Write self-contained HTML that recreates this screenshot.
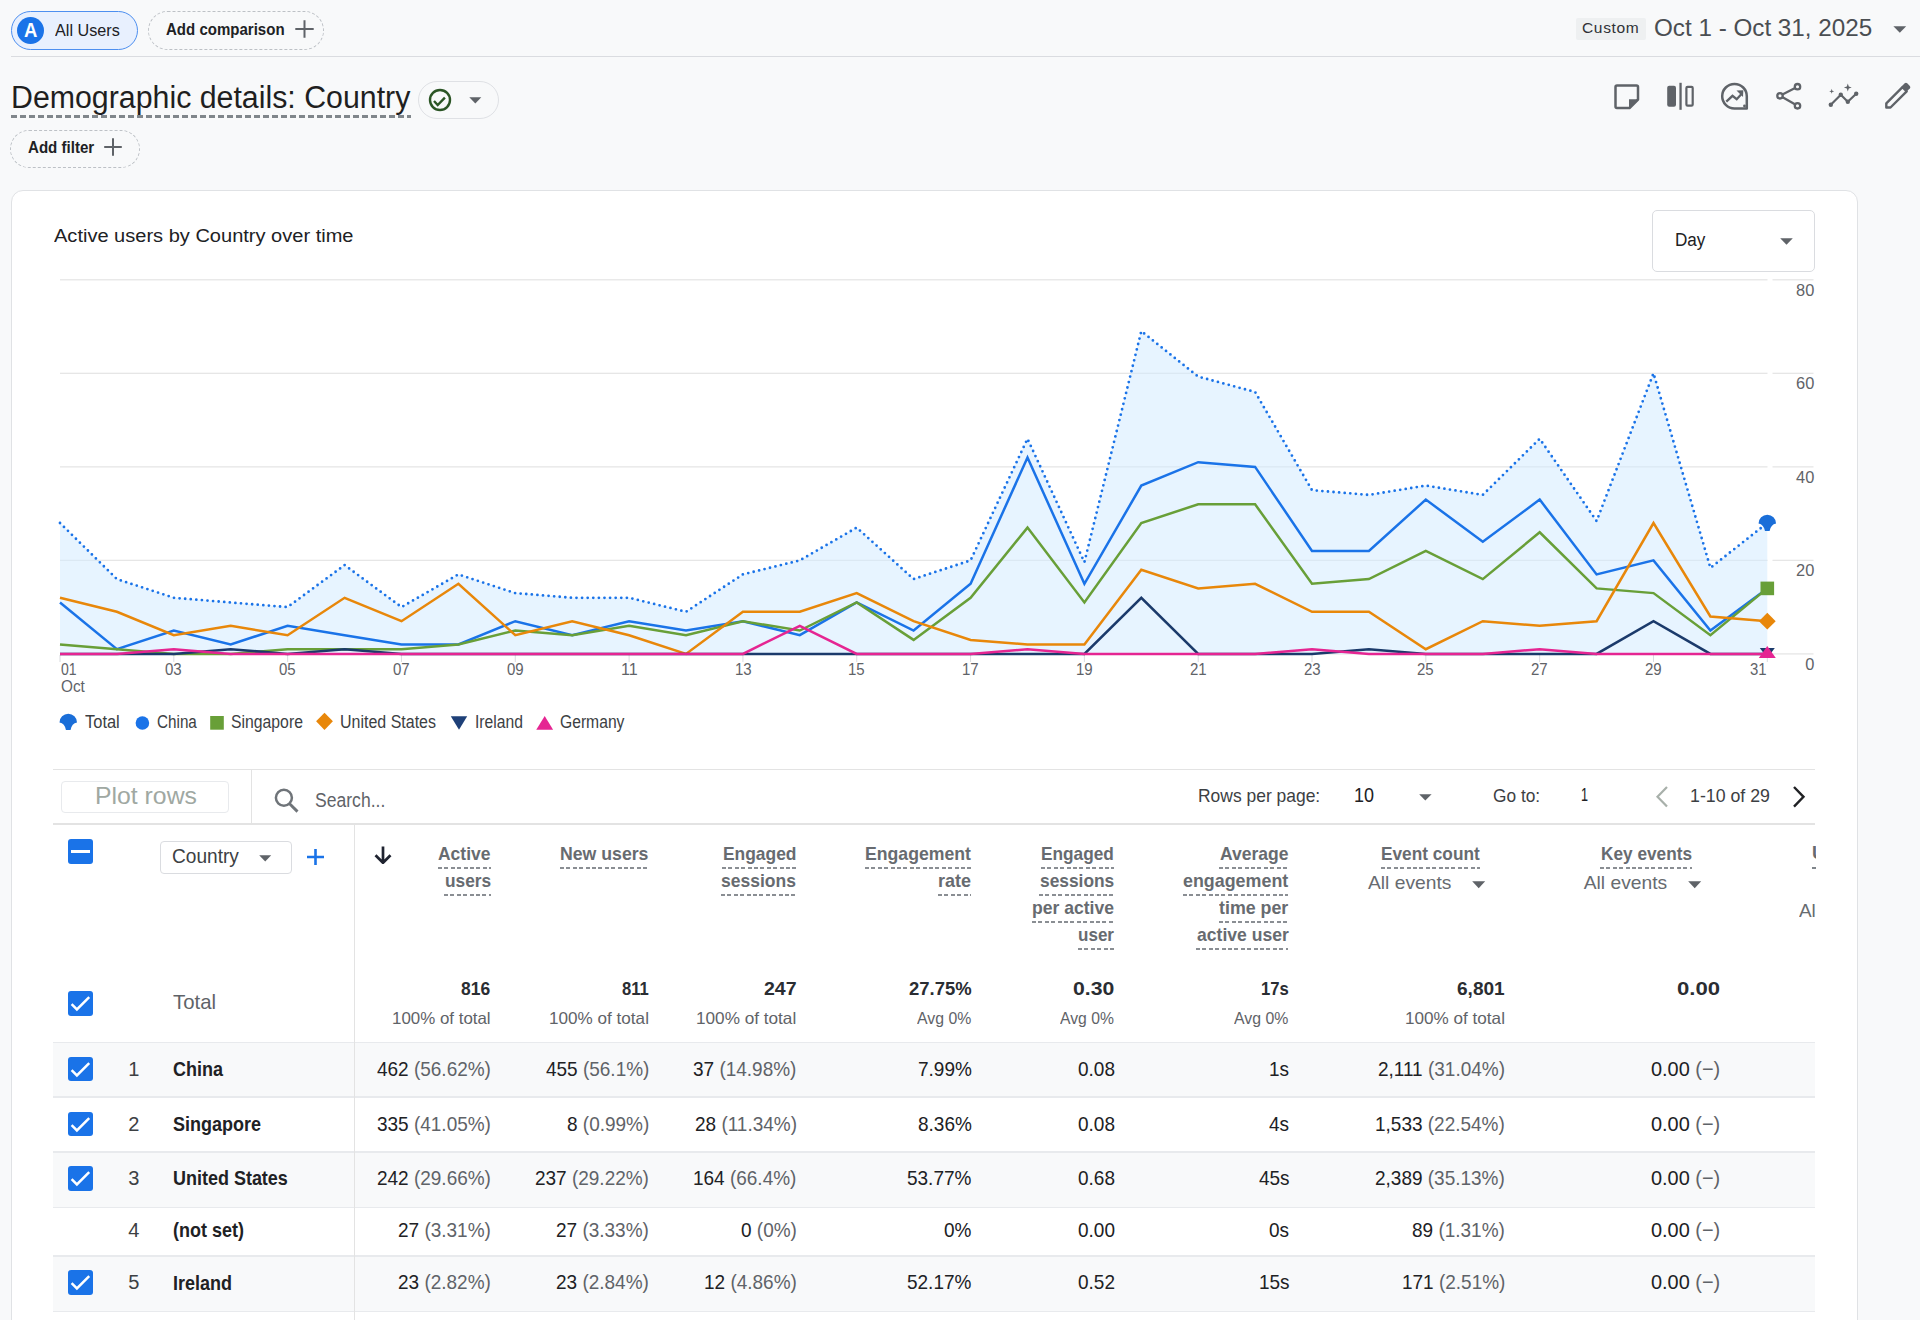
<!DOCTYPE html>
<html><head><meta charset="utf-8">
<style>
*{box-sizing:border-box;margin:0;padding:0}
html,body{width:1920px;height:1320px;overflow:hidden;background:#f8f9fa;font-family:"Liberation Sans",sans-serif;color:#202124}
.t{position:absolute;white-space:nowrap}
.a,.icon{position:absolute}
.i{font-style:normal;color:#5f6368}
</style></head>
<body>

<div class="a" style="left:10.5px;top:11px;width:127px;height:39px;border-radius:20px;background:#e8f0fe;border:1px solid #4d8ff0"></div>
<div class="a" style="left:16.8px;top:16.8px;width:27px;height:27px;border-radius:50%;background:#1a73e8"></div>
<div class="t" style="left:23.60px;transform-origin:0 0;top:18.88px;font-size:20.35px;line-height:22.73px;color:#fff;font-weight:bold;transform:scaleX(0.9114);">A</div>
<div class="t" style="left:55.00px;transform-origin:0 0;top:21.37px;font-size:16.28px;line-height:18.18px;color:#202124;transform:scaleX(0.9951);">All Users</div>
<div class="a" style="left:148.2px;top:11.3px;width:176.3px;height:38.5px;border-radius:20px;border:1px dashed #bdc1c6"></div>
<div class="t" style="left:165.90px;transform-origin:0 0;top:20.29px;font-size:17.08px;line-height:19.08px;color:#202124;font-weight:bold;transform:scaleX(0.8802);">Add comparison</div>
<svg class="a" style="left:295px;top:20px" width="19" height="18" viewBox="0 0 19 18"><path d="M9.5 0.3v17.5M0.3 9h18.4" stroke="#5f6368" stroke-width="2"/></svg>
<div class="a" style="left:10.7px;top:56px;width:1910px;height:1px;background:#dadce0"></div>
<div class="a" style="left:1576px;top:18.1px;width:69.7px;height:22px;background:#eef0f1;border-radius:2px"></div>
<div class="t" style="left:1582.00px;transform-origin:0 0;top:19.43px;font-size:15.55px;line-height:17.37px;color:#2f3236;letter-spacing:0.64px;">Custom</div>
<div class="t" style="left:1654.30px;transform-origin:0 0;top:14.80px;font-size:23.98px;line-height:26.79px;color:#4a4e52;transform:scaleX(1.0108);">Oct 1 - Oct 31, 2025</div>
<svg class="a" style="left:1893px;top:26px" width="14" height="7"><path d="M0.4 0.3h12.8L6.8 6.8z" fill="#5f6368"/></svg>
<div class="t" style="left:10.80px;transform-origin:0 0;top:80.14px;font-size:30.67px;line-height:34.26px;color:#1f1f1f;transform:scaleX(0.9889);">Demographic details: Country</div>
<div class="a" style="left:11px;top:115px;width:399.5px;height:3px;background:repeating-linear-gradient(90deg,#80868b 0 5.6px,transparent 5.6px 9px)"></div>
<div class="a" style="left:417.5px;top:81.2px;width:81.2px;height:37.6px;border-radius:19px;border:1px solid #dfe1e5"></div>
<svg class="a" style="left:428px;top:88px" width="24" height="24" viewBox="0 0 24 24"><circle cx="12" cy="12" r="10" fill="none" stroke="#2b5525" stroke-width="2.4"/><path d="M6 13l3.7 4 7.2-7.3" fill="none" stroke="#2b5525" stroke-width="2.4"/></svg>
<svg class="a" style="left:469px;top:97px" width="13" height="7"><path d="M0.3 0.3h12L6.3 6.6z" fill="#5f6368"/></svg>
<div class="a" style="left:10px;top:130.4px;width:130px;height:38px;border-radius:19px;border:1px dashed #bdc1c6"></div>
<div class="t" style="left:27.50px;transform-origin:0 0;top:138.35px;font-size:17.30px;line-height:19.32px;color:#202124;font-weight:bold;transform:scaleX(0.8725);">Add filter</div>
<svg class="a" style="left:104px;top:138px" width="18" height="18" viewBox="0 0 18 18"><path d="M9 0.2v17.6M0.2 9h17.6" stroke="#5f6368" stroke-width="2"/></svg>
<!-- ICONS -->
<svg class="icon" style="left:1600px;top:75px" width="320" height="45" viewBox="0 0 320 45">
<path d="M17 10.5h19.5a1.5 1.5 0 0 1 1.5 1.5v12.5l-8.5 8.5H17a1.5 1.5 0 0 1-1.5-1.5V12a1.5 1.5 0 0 1 1.5-1.5z" fill="none" stroke="#5f6368" stroke-width="2.5" stroke-linejoin="round"/>
<path d="M29 24.3h9l-9 9z" fill="#5f6368"/>
<rect x="67.2" y="10.8" width="8.8" height="21" rx="2" fill="#5f6368"/>
<rect x="79.4" y="7.8" width="2.3" height="27" fill="#5f6368"/>
<rect x="86.4" y="11.9" width="6.3" height="18.8" rx="1.2" fill="none" stroke="#5f6368" stroke-width="2.2"/>
<path d="M146.8 21.2A12.3 12.3 0 1 0 134.5 33.5H146.8Z" fill="none" stroke="#5f6368" stroke-width="2.5" stroke-linejoin="round"/>
<circle cx="144.5" cy="31" r="1.4" fill="#5f6368"/>
<path d="M126.3 26.7l6.2-5.9 4.2 3.4 5.5-6" fill="none" stroke="#5f6368" stroke-width="2.3"/>
<path d="M136.5 15.6l6.8-.3-.3 6.8z" fill="#5f6368"/>
<path d="M180 20.8L197.5 11.7M180 20.8L197.5 30.8" stroke="#5f6368" stroke-width="2.3"/>
<circle cx="197.5" cy="11.7" r="2.7" fill="#f8f9fa" stroke="#5f6368" stroke-width="2.3"/>
<circle cx="180" cy="20.8" r="2.7" fill="#f8f9fa" stroke="#5f6368" stroke-width="2.3"/>
<circle cx="197.5" cy="30.8" r="2.7" fill="#f8f9fa" stroke="#5f6368" stroke-width="2.3"/>
<path d="M230.8 29.7L240.8 19.7 247.8 26.7 256.2 18.7" fill="none" stroke="#5f6368" stroke-width="2.2"/>
<circle cx="230.8" cy="29.7" r="2.2" fill="#5f6368"/><circle cx="240.8" cy="19.7" r="2.2" fill="#5f6368"/><circle cx="247.8" cy="26.7" r="2.2" fill="#5f6368"/><circle cx="256.2" cy="18.7" r="2.2" fill="#5f6368"/>
<path d="M247.8 8.6l1 2.9 2.9 1-2.9 1-1 2.9-1-2.9-2.9-1 2.9-1z" fill="#5f6368"/>
<path d="M231.7 13.8l.6 1.9 1.9.6-1.9.6-.6 1.9-.6-1.9-1.9-.6 1.9-.6z" fill="#5f6368"/>
<path d="M286.3 32.5v-4.2L302.5 12.1l4.2 4.2L290.5 32.5z" fill="none" stroke="#5f6368" stroke-width="2.4" stroke-linejoin="round"/>
<path d="M301.5 11.5l3.2-3.2a1.8 1.8 0 0 1 2.5 0l2.6 2.6a1.8 1.8 0 0 1 0 2.5l-3.2 3.2z" fill="#5f6368"/>
</svg>

<div class="a" style="left:11px;top:190px;width:1847px;height:1200px;background:#fff;border:1px solid #e0e2e5;border-radius:12px"></div>
<div class="t" style="left:53.75px;transform-origin:0 0;top:225.44px;font-size:19.19px;line-height:21.43px;color:#202124;transform:scaleX(1.0440);">Active users by Country over time</div>
<div class="a" style="left:1652.4px;top:209.9px;width:162.4px;height:62.4px;border:1px solid #dadce0;border-radius:5px;background:#fff"></div>
<div class="t" style="left:1674.90px;transform-origin:0 0;top:229.34px;font-size:19.19px;line-height:21.43px;color:#202124;transform:scaleX(0.8914);">Day</div>
<svg class="a" style="left:1780px;top:237.8px" width="13" height="7"><path d="M0.2 0.2h12.6L6.5 6.8z" fill="#5f6368"/></svg>
<svg class="a" style="left:0;top:0" width="1920" height="760">
<rect x="60" y="279.15" width="1707.5" height="1.3" fill="#e6e6e6"/><rect x="1772.5" y="279.15" width="41" height="1.3" fill="#e6e6e6"/>
<rect x="60" y="372.68" width="1707.5" height="1.3" fill="#e6e6e6"/><rect x="1772.5" y="372.68" width="41" height="1.3" fill="#e6e6e6"/>
<rect x="60" y="466.20" width="1707.5" height="1.3" fill="#e6e6e6"/><rect x="1772.5" y="466.20" width="41" height="1.3" fill="#e6e6e6"/>
<rect x="60" y="559.73" width="1707.5" height="1.3" fill="#e6e6e6"/><rect x="1772.5" y="559.73" width="41" height="1.3" fill="#e6e6e6"/>
<rect x="60" y="653.25" width="1707.5" height="1.3" fill="#e6e6e6"/><rect x="1772.5" y="653.25" width="41" height="1.3" fill="#e6e6e6"/>
<path d="M60.0,653.9 L60.0,523.0 116.9,579.1 173.8,597.8 230.7,602.5 287.6,607.1 344.6,565.1 401.5,607.1 458.4,574.4 515.3,593.1 572.2,597.8 629.1,597.8 686.0,611.8 742.9,574.4 799.8,560.4 856.7,527.6 913.6,579.1 970.6,560.4 1027.5,438.8 1084.4,562.2 1141.3,331.2 1198.2,376.6 1255.1,392.0 1312.0,490.2 1368.9,494.9 1425.8,485.6 1482.8,494.9 1539.7,438.8 1596.6,521.1 1653.5,373.3 1710.4,567.9 1767.3,523.0 L1767.3,653.9 Z" fill="#cfeaff" fill-opacity="0.5"/>
<rect x="59.50" y="655" width="1" height="7" fill="#dadce0"/>
<rect x="173.32" y="655" width="1" height="7" fill="#dadce0"/>
<rect x="287.14" y="655" width="1" height="7" fill="#dadce0"/>
<rect x="400.96" y="655" width="1" height="7" fill="#dadce0"/>
<rect x="514.78" y="655" width="1" height="7" fill="#dadce0"/>
<rect x="628.60" y="655" width="1" height="7" fill="#dadce0"/>
<rect x="742.42" y="655" width="1" height="7" fill="#dadce0"/>
<rect x="856.24" y="655" width="1" height="7" fill="#dadce0"/>
<rect x="970.06" y="655" width="1" height="7" fill="#dadce0"/>
<rect x="1083.88" y="655" width="1" height="7" fill="#dadce0"/>
<rect x="1197.70" y="655" width="1" height="7" fill="#dadce0"/>
<rect x="1311.52" y="655" width="1" height="7" fill="#dadce0"/>
<rect x="1425.34" y="655" width="1" height="7" fill="#dadce0"/>
<rect x="1539.16" y="655" width="1" height="7" fill="#dadce0"/>
<rect x="1652.98" y="655" width="1" height="7" fill="#dadce0"/>
<rect x="1766.80" y="655" width="1" height="7" fill="#dadce0"/>
<polyline points="60.0,523.0 116.9,579.1 173.8,597.8 230.7,602.5 287.6,607.1 344.6,565.1 401.5,607.1 458.4,574.4 515.3,593.1 572.2,597.8 629.1,597.8 686.0,611.8 742.9,574.4 799.8,560.4 856.7,527.6 913.6,579.1 970.6,560.4 1027.5,438.8 1084.4,562.2 1141.3,331.2 1198.2,376.6 1255.1,392.0 1312.0,490.2 1368.9,494.9 1425.8,485.6 1482.8,494.9 1539.7,438.8 1596.6,521.1 1653.5,373.3 1710.4,567.9 1767.3,523.0" fill="none" stroke="#1a73e8" stroke-width="2.8" stroke-dasharray="0 5.6" stroke-linecap="round"/>
<polyline points="60.0,602.5 116.9,649.2 173.8,630.5 230.7,644.5 287.6,625.8 344.6,635.2 401.5,644.5 458.4,644.5 515.3,621.2 572.2,635.2 629.1,621.2 686.0,630.5 742.9,621.2 799.8,635.2 856.7,602.5 913.6,630.5 970.6,583.8 1027.5,457.5 1084.4,583.8 1141.3,485.6 1198.2,462.2 1255.1,466.9 1312.0,551.0 1368.9,551.0 1425.8,499.6 1482.8,541.7 1539.7,499.6 1596.6,574.4 1653.5,560.4 1710.4,630.5 1767.3,588.4" fill="none" stroke="#1a73e8" stroke-width="2.5" stroke-linejoin="miter"/>
<polyline points="60.0,644.5 116.9,649.2 173.8,653.9 230.7,653.9 287.6,649.2 344.6,649.2 401.5,649.2 458.4,644.5 515.3,630.5 572.2,635.2 629.1,625.8 686.0,635.2 742.9,621.2 799.8,630.5 856.7,602.5 913.6,639.9 970.6,597.8 1027.5,527.6 1084.4,602.5 1141.3,523.0 1198.2,504.3 1255.1,504.3 1312.0,583.8 1368.9,579.1 1425.8,551.0 1482.8,579.1 1539.7,532.3 1596.6,588.4 1653.5,593.1 1710.4,635.2 1767.3,588.4" fill="none" stroke="#689f38" stroke-width="2.5" stroke-linejoin="miter"/>
<polyline points="60.0,597.8 116.9,611.8 173.8,635.2 230.7,625.8 287.6,635.2 344.6,597.8 401.5,621.2 458.4,583.8 515.3,635.2 572.2,621.2 629.1,635.2 686.0,653.9 742.9,611.8 799.8,611.8 856.7,593.1 913.6,621.2 970.6,639.9 1027.5,644.5 1084.4,644.5 1141.3,569.7 1198.2,588.4 1255.1,583.8 1312.0,611.8 1368.9,611.8 1425.8,649.2 1482.8,621.2 1539.7,625.8 1596.6,621.2 1653.5,523.0 1710.4,616.5 1767.3,621.2" fill="none" stroke="#e8870a" stroke-width="2.5" stroke-linejoin="miter"/>
<polyline points="60.0,653.9 116.9,653.9 173.8,653.9 230.7,649.2 287.6,653.9 344.6,649.2 401.5,653.9 458.4,653.9 515.3,653.9 572.2,653.9 629.1,653.9 686.0,653.9 742.9,653.9 799.8,653.9 856.7,653.9 913.6,653.9 970.6,653.9 1027.5,653.9 1084.4,653.9 1141.3,597.8 1198.2,653.9 1255.1,653.9 1312.0,653.9 1368.9,649.2 1425.8,653.9 1482.8,653.9 1539.7,653.9 1596.6,653.9 1653.5,621.2 1710.4,653.9 1767.3,653.9" fill="none" stroke="#1b3a6b" stroke-width="2.5" stroke-linejoin="miter"/>
<polyline points="60.0,653.9 116.9,653.9 173.8,649.2 230.7,653.9 287.6,653.9 344.6,653.9 401.5,653.9 458.4,653.9 515.3,653.9 572.2,653.9 629.1,653.9 686.0,653.9 742.9,653.9 799.8,625.8 856.7,653.9 913.6,653.9 970.6,653.9 1027.5,649.2 1084.4,653.9 1141.3,653.9 1198.2,653.9 1255.1,653.9 1312.0,649.2 1368.9,653.9 1425.8,653.9 1482.8,653.9 1539.7,649.2 1596.6,653.9 1653.5,653.9 1710.4,653.9 1767.3,653.9" fill="none" stroke="#e52592" stroke-width="2.5" stroke-linejoin="miter"/>
<path transform="translate(1767.3,523.5)" d="M-8.75 0A8.75 8.75 0 0 1 8.75 0Q3.5 1 2.3 7.5H-2.3Q-3.5 1 -8.75 0Z" fill="#1a6ed8"/>
<rect x="1760.5" y="581.6" width="13.6" height="13.6" fill="#689f38"/>
<path transform="translate(1767.3,621.2)" d="M0 -8.4L8.4 0 0 8.4 -8.4 0Z" fill="#e8870a"/>
<path transform="translate(1767.3,653.9)" d="M-7.5 -5.8H7.5L0 4Z" fill="#1b3a6b"/>
<path transform="translate(1767.3,653.9)" d="M-8.5 4.2H8.5L0 -8Z" fill="#e52592"/>
</svg>
<div class="t" style="left:1796.03px;transform-origin:0 0;top:280.64px;font-size:16.42px;line-height:18.35px;color:#5f6368;">80</div>
<div class="t" style="left:1796.03px;transform-origin:0 0;top:374.14px;font-size:16.42px;line-height:18.35px;color:#5f6368;">60</div>
<div class="t" style="left:1796.03px;transform-origin:0 0;top:467.64px;font-size:16.42px;line-height:18.35px;color:#5f6368;">40</div>
<div class="t" style="left:1796.03px;transform-origin:0 0;top:561.14px;font-size:16.42px;line-height:18.35px;color:#5f6368;">20</div>
<div class="t" style="left:1805.18px;transform-origin:0 0;top:654.64px;font-size:16.42px;line-height:18.35px;color:#5f6368;">0</div>
<div class="t" style="left:61.00px;transform-origin:0 0;top:660.70px;font-size:16.57px;line-height:18.51px;color:#5f6368;transform:scaleX(0.8463);">01</div>
<div class="t" style="left:61.00px;transform-origin:0 0;top:676.84px;font-size:16.42px;line-height:18.35px;color:#5f6368;transform:scaleX(0.9358);">Oct</div>
<div class="t" style="left:165.47px;transform-origin:0 0;top:660.70px;font-size:16.57px;line-height:18.51px;color:#5f6368;transform:scaleX(0.9059);">03</div>
<div class="t" style="left:279.29px;transform-origin:0 0;top:660.70px;font-size:16.57px;line-height:18.51px;color:#5f6368;transform:scaleX(0.9059);">05</div>
<div class="t" style="left:393.11px;transform-origin:0 0;top:660.70px;font-size:16.57px;line-height:18.51px;color:#5f6368;transform:scaleX(0.9059);">07</div>
<div class="t" style="left:506.93px;transform-origin:0 0;top:660.70px;font-size:16.57px;line-height:18.51px;color:#5f6368;transform:scaleX(0.9059);">09</div>
<div class="t" style="left:620.75px;transform-origin:0 0;top:660.70px;font-size:16.57px;line-height:18.51px;color:#5f6368;transform:scaleX(0.9714);">11</div>
<div class="t" style="left:734.57px;transform-origin:0 0;top:660.70px;font-size:16.57px;line-height:18.51px;color:#5f6368;transform:scaleX(0.9059);">13</div>
<div class="t" style="left:848.39px;transform-origin:0 0;top:660.70px;font-size:16.57px;line-height:18.51px;color:#5f6368;transform:scaleX(0.9059);">15</div>
<div class="t" style="left:962.21px;transform-origin:0 0;top:660.70px;font-size:16.57px;line-height:18.51px;color:#5f6368;transform:scaleX(0.9059);">17</div>
<div class="t" style="left:1076.03px;transform-origin:0 0;top:660.70px;font-size:16.57px;line-height:18.51px;color:#5f6368;transform:scaleX(0.9059);">19</div>
<div class="t" style="left:1189.85px;transform-origin:0 0;top:660.70px;font-size:16.57px;line-height:18.51px;color:#5f6368;transform:scaleX(0.9059);">21</div>
<div class="t" style="left:1303.67px;transform-origin:0 0;top:660.70px;font-size:16.57px;line-height:18.51px;color:#5f6368;transform:scaleX(0.9059);">23</div>
<div class="t" style="left:1417.49px;transform-origin:0 0;top:660.70px;font-size:16.57px;line-height:18.51px;color:#5f6368;transform:scaleX(0.9059);">25</div>
<div class="t" style="left:1531.31px;transform-origin:0 0;top:660.70px;font-size:16.57px;line-height:18.51px;color:#5f6368;transform:scaleX(0.9059);">27</div>
<div class="t" style="left:1645.13px;transform-origin:0 0;top:660.70px;font-size:16.57px;line-height:18.51px;color:#5f6368;transform:scaleX(0.9059);">29</div>
<div class="t" style="left:1750.20px;transform-origin:0 0;top:660.70px;font-size:16.57px;line-height:18.51px;color:#5f6368;transform:scaleX(0.9005);">31</div>
<svg class="a" style="left:0;top:700px" width="640" height="40">
<path transform="translate(68.25,22.5)" d="M-8.75 0A8.75 8.75 0 0 1 8.75 0Q3.5 1 2.3 7.4H-2.3Q-3.5 1 -8.75 0Z" fill="#1a6ed8"/>
<circle cx="142.4" cy="23" r="6.8" fill="#1a73e8"/>
<rect x="210.2" y="16" width="13.6" height="13.7" fill="#689f38"/>
<path d="M324.5 12.8L332.9 21.35 324.5 29.9 316.1 21.35Z" fill="#e8870a"/>
<path d="M450.8 16.25H467.2L459 29.7Z" fill="#1e4078"/>
<path d="M544.7 16H553.1L536.25 29.7Z" fill="none"/><path d="M544.7 16L553.1 29.7H536.25Z" fill="#e52592"/>
</svg>
<div class="t" style="left:84.70px;transform-origin:0 0;top:712.90px;font-size:17.51px;line-height:19.56px;color:#3c4043;transform:scaleX(0.9406);">Total</div>
<div class="t" style="left:156.70px;transform-origin:0 0;top:712.90px;font-size:17.51px;line-height:19.56px;color:#3c4043;transform:scaleX(0.8712);">China</div>
<div class="t" style="left:231.00px;transform-origin:0 0;top:712.90px;font-size:17.51px;line-height:19.56px;color:#3c4043;transform:scaleX(0.9015);">Singapore</div>
<div class="t" style="left:340.20px;transform-origin:0 0;top:712.90px;font-size:17.51px;line-height:19.56px;color:#3c4043;transform:scaleX(0.9136);">United States</div>
<div class="t" style="left:475.00px;transform-origin:0 0;top:712.90px;font-size:17.51px;line-height:19.56px;color:#3c4043;transform:scaleX(0.8963);">Ireland</div>
<div class="t" style="left:560.00px;transform-origin:0 0;top:712.90px;font-size:17.51px;line-height:19.56px;color:#3c4043;transform:scaleX(0.8955);">Germany</div>
<div class="a" style="left:53px;top:769px;width:1762px;height:1px;background:#e3e3e3"></div>
<div class="a" style="left:61.3px;top:780.6px;width:168.2px;height:32px;border:1px solid #e8eaed;border-radius:4px"></div>
<div class="t" style="left:94.70px;transform-origin:0 0;top:783.03px;font-size:23.84px;line-height:26.63px;color:#a0a8a2;transform:scaleX(1.0405);">Plot rows</div>
<div class="a" style="left:251px;top:769px;width:1px;height:55px;background:#e3e3e3"></div>
<svg class="a" style="left:270px;top:784px" width="32" height="32" viewBox="0 0 32 32"><circle cx="13.9" cy="13.8" r="8" fill="none" stroke="#6f7479" stroke-width="2.5"/><path d="M19.6 19.7l7.9 7.9" stroke="#6f7479" stroke-width="2.9"/></svg>
<div class="t" style="left:314.70px;transform-origin:0 0;top:789.51px;font-size:19.33px;line-height:21.59px;color:#5f6368;transform:scaleX(0.9086);">Search...</div>
<div class="t" style="left:1198.00px;transform-origin:0 0;top:786.06px;font-size:18.17px;line-height:20.29px;color:#3c4043;transform:scaleX(0.9609);">Rows per page:</div>
<div class="t" style="left:1354.20px;transform-origin:0 0;top:785.01px;font-size:19.33px;line-height:21.59px;color:#202124;transform:scaleX(0.9300);">10</div>
<svg class="a" style="left:1419.2px;top:793.7px" width="13" height="7"><path d="M0.2 0.2h12.4L6.3 6.6z" fill="#5f6368"/></svg>
<div class="t" style="left:1492.75px;transform-origin:0 0;top:786.09px;font-size:18.02px;line-height:20.13px;color:#3c4043;transform:scaleX(0.9600);">Go to:</div>
<div class="t" style="left:1581.00px;transform-origin:0 0;top:785.43px;font-size:18.75px;line-height:20.94px;color:#202124;transform:scaleX(0.6727);">1</div>
<svg class="a" style="left:1654px;top:785px" width="16" height="24"><path d="M13 2L3.5 11.8 13 21.6" fill="none" stroke="#a8b0aa" stroke-width="2.2"/></svg>
<div class="t" style="left:1690.40px;transform-origin:0 0;top:786.09px;font-size:18.02px;line-height:20.13px;color:#3c4043;transform:scaleX(0.9858);">1-10 of 29</div>
<svg class="a" style="left:1791px;top:785px" width="16" height="24"><path d="M3 2l9.5 9.8L3 21.6" fill="none" stroke="#202124" stroke-width="2.4"/></svg>
<div class="a" style="left:53px;top:823.3px;width:1762px;height:1.3px;background:#e3e3e3"></div>
<div class="a" style="left:353.5px;top:824px;width:1.3px;height:500px;background:#e3e3e3"></div>
<div class="a" style="left:67.9px;top:839.1px;width:24.9px;height:24.6px;background:#1a73e8;border-radius:3px"></div>
<div class="a" style="left:70.5px;top:850.4px;width:19.8px;height:2.2px;background:#fff"></div>
<div class="a" style="left:160.3px;top:841.3px;width:132px;height:32.4px;border:1px solid #dadce0;border-radius:4px;background:#fff"></div>
<div class="t" style="left:171.80px;transform-origin:0 0;top:846.21px;font-size:19.33px;line-height:21.59px;color:#3c4043;transform:scaleX(0.9881);">Country</div>
<svg class="a" style="left:259.3px;top:854.6px" width="13" height="7"><path d="M0.2 0.2h12L6.2 6.5z" fill="#5f6368"/></svg>
<svg class="a" style="left:307px;top:848.5px" width="17" height="16"><path d="M8.5 0v16M0 8h17" stroke="#1a73e8" stroke-width="2.6"/></svg>
<svg class="a" style="left:374px;top:846px" width="18" height="18" viewBox="0 0 18 18"><path d="M9 0.5v16M1.5 9.3L9 16.8 16.5 9.3" fill="none" stroke="#1f2330" stroke-width="2.7"/></svg>
<div class="t" style="left:438.30px;transform-origin:0 0;top:842.57px;font-size:19.04px;line-height:21.27px;color:#676b70;font-weight:bold;transform:scaleX(0.9183);">Active</div>
<div class="a" style="left:437.8px;top:866.8px;width:53.0px;height:2px;background:repeating-linear-gradient(90deg,#8a8e93 0 4px,transparent 4px 6.4px)"></div>
<div class="t" style="left:444.60px;transform-origin:0 0;top:869.57px;font-size:19.04px;line-height:21.27px;color:#676b70;font-weight:bold;transform:scaleX(0.9096);">users</div>
<div class="a" style="left:444.1px;top:893.8px;width:46.7px;height:2px;background:repeating-linear-gradient(90deg,#8a8e93 0 4px,transparent 4px 6.4px)"></div>
<div class="t" style="left:560.00px;transform-origin:0 0;top:842.57px;font-size:19.04px;line-height:21.27px;color:#676b70;font-weight:bold;transform:scaleX(0.9291);">New users</div>
<div class="a" style="left:559.5px;top:866.8px;width:89.0px;height:2px;background:repeating-linear-gradient(90deg,#8a8e93 0 4px,transparent 4px 6.4px)"></div>
<div class="t" style="left:722.50px;transform-origin:0 0;top:842.57px;font-size:19.04px;line-height:21.27px;color:#676b70;font-weight:bold;transform:scaleX(0.9142);">Engaged</div>
<div class="a" style="left:722.0px;top:866.8px;width:74.0px;height:2px;background:repeating-linear-gradient(90deg,#8a8e93 0 4px,transparent 4px 6.4px)"></div>
<div class="t" style="left:721.00px;transform-origin:0 0;top:869.57px;font-size:19.04px;line-height:21.27px;color:#676b70;font-weight:bold;transform:scaleX(0.9203);">sessions</div>
<div class="a" style="left:720.5px;top:893.8px;width:75.5px;height:2px;background:repeating-linear-gradient(90deg,#8a8e93 0 4px,transparent 4px 6.4px)"></div>
<div class="t" style="left:865.00px;transform-origin:0 0;top:842.57px;font-size:19.04px;line-height:21.27px;color:#676b70;font-weight:bold;transform:scaleX(0.9278);">Engagement</div>
<div class="a" style="left:864.5px;top:866.8px;width:106.5px;height:2px;background:repeating-linear-gradient(90deg,#8a8e93 0 4px,transparent 4px 6.4px)"></div>
<div class="t" style="left:938.00px;transform-origin:0 0;top:869.57px;font-size:19.04px;line-height:21.27px;color:#676b70;font-weight:bold;transform:scaleX(0.9445);">rate</div>
<div class="a" style="left:937.5px;top:893.8px;width:33.5px;height:2px;background:repeating-linear-gradient(90deg,#8a8e93 0 4px,transparent 4px 6.4px)"></div>
<div class="t" style="left:1041.10px;transform-origin:0 0;top:842.57px;font-size:19.04px;line-height:21.27px;color:#676b70;font-weight:bold;transform:scaleX(0.9067);">Engaged</div>
<div class="a" style="left:1040.6px;top:866.8px;width:73.4px;height:2px;background:repeating-linear-gradient(90deg,#8a8e93 0 4px,transparent 4px 6.4px)"></div>
<div class="t" style="left:1039.70px;transform-origin:0 0;top:869.57px;font-size:19.04px;line-height:21.27px;color:#676b70;font-weight:bold;transform:scaleX(0.9117);">sessions</div>
<div class="a" style="left:1039.2px;top:893.8px;width:74.8px;height:2px;background:repeating-linear-gradient(90deg,#8a8e93 0 4px,transparent 4px 6.4px)"></div>
<div class="t" style="left:1032.00px;transform-origin:0 0;top:896.57px;font-size:19.04px;line-height:21.27px;color:#676b70;font-weight:bold;transform:scaleX(0.9222);">per active</div>
<div class="a" style="left:1031.5px;top:920.8px;width:82.5px;height:2px;background:repeating-linear-gradient(90deg,#8a8e93 0 4px,transparent 4px 6.4px)"></div>
<div class="t" style="left:1078.00px;transform-origin:0 0;top:923.57px;font-size:19.04px;line-height:21.27px;color:#676b70;font-weight:bold;transform:scaleX(0.8950);">user</div>
<div class="a" style="left:1077.5px;top:947.8px;width:36.5px;height:2px;background:repeating-linear-gradient(90deg,#8a8e93 0 4px,transparent 4px 6.4px)"></div>
<div class="t" style="left:1219.80px;transform-origin:0 0;top:842.57px;font-size:19.04px;line-height:21.27px;color:#676b70;font-weight:bold;transform:scaleX(0.9201);">Average</div>
<div class="a" style="left:1219.3px;top:866.8px;width:69.0px;height:2px;background:repeating-linear-gradient(90deg,#8a8e93 0 4px,transparent 4px 6.4px)"></div>
<div class="t" style="left:1183.00px;transform-origin:0 0;top:869.57px;font-size:19.04px;line-height:21.27px;color:#676b70;font-weight:bold;transform:scaleX(0.9389);">engagement</div>
<div class="a" style="left:1182.5px;top:893.8px;width:105.8px;height:2px;background:repeating-linear-gradient(90deg,#8a8e93 0 4px,transparent 4px 6.4px)"></div>
<div class="t" style="left:1219.00px;transform-origin:0 0;top:896.57px;font-size:19.04px;line-height:21.27px;color:#676b70;font-weight:bold;transform:scaleX(0.9356);">time per</div>
<div class="a" style="left:1218.5px;top:920.8px;width:69.8px;height:2px;background:repeating-linear-gradient(90deg,#8a8e93 0 4px,transparent 4px 6.4px)"></div>
<div class="t" style="left:1196.50px;transform-origin:0 0;top:923.57px;font-size:19.04px;line-height:21.27px;color:#676b70;font-weight:bold;transform:scaleX(0.9227);">active user</div>
<div class="a" style="left:1196.0px;top:947.8px;width:92.3px;height:2px;background:repeating-linear-gradient(90deg,#8a8e93 0 4px,transparent 4px 6.4px)"></div>
<div class="t" style="left:1381.25px;transform-origin:0 0;top:842.57px;font-size:19.04px;line-height:21.27px;color:#676b70;font-weight:bold;transform:scaleX(0.9063);">Event count</div>
<div class="a" style="left:1380.8px;top:866.8px;width:99.2px;height:2px;background:repeating-linear-gradient(90deg,#8a8e93 0 4px,transparent 4px 6.4px)"></div>
<div class="t" style="left:1600.75px;transform-origin:0 0;top:842.57px;font-size:19.04px;line-height:21.27px;color:#676b70;font-weight:bold;transform:scaleX(0.9052);">Key events</div>
<div class="a" style="left:1600.2px;top:866.8px;width:91.5px;height:2px;background:repeating-linear-gradient(90deg,#8a8e93 0 4px,transparent 4px 6.4px)"></div>
<div class="t" style="left:1368.00px;transform-origin:0 0;top:872.07px;font-size:19.26px;line-height:21.51px;color:#676b70;">All events</div>
<svg class="a" style="left:1471.75px;top:880.75px" width="14" height="8"><path d="M0.2 0.2h13L6.7 7.3z" fill="#5f6368"/></svg>
<div class="t" style="left:1583.75px;transform-origin:0 0;top:872.07px;font-size:19.26px;line-height:21.51px;color:#676b70;">All events</div>
<svg class="a" style="left:1687.5px;top:880.75px" width="14" height="8"><path d="M0.2 0.2h13L6.7 7.3z" fill="#5f6368"/></svg>
<div class="t" style="left:1812.00px;transform-origin:0 0;top:843.09px;font-size:18.47px;line-height:20.63px;color:#676b70;font-weight:bold;">U</div>
<div class="a" style="left:1812px;top:866.8px;width:10px;height:2px;background:#80868b"></div>
<div class="t" style="left:1798.75px;transform-origin:0 0;top:899.57px;font-size:19.26px;line-height:21.51px;color:#676b70;transform:scaleX(0.9831);">Al</div>
<div class="a" style="left:68px;top:991.0px;width:24.7px;height:24.7px;background:#1a73e8;border-radius:3px"><svg class="a" style="left:0;top:0" width="25" height="25"><path d="M3.6 13.1L8.9 18.4 21.2 6.2" fill="none" stroke="#fff" stroke-width="2.5"/></svg></div>
<div class="t" style="left:173.00px;transform-origin:0 0;top:991.15px;font-size:20.49px;line-height:22.89px;color:#5f6368;transform:scaleX(0.9932);">Total</div>
<div class="t" style="left:461.30px;transform-origin:0 0;top:979.29px;font-size:18.02px;line-height:20.13px;color:#2a2d32;font-weight:bold;transform:scaleX(0.9683);">816</div>
<div class="t" style="left:391.70px;transform-origin:0 0;top:1009.87px;font-size:16.72px;line-height:18.67px;color:#5f6368;transform:scaleX(1.0115);">100% of total</div>
<div class="t" style="left:622.00px;transform-origin:0 0;top:979.29px;font-size:18.02px;line-height:20.13px;color:#2a2d32;font-weight:bold;transform:scaleX(0.9222);">811</div>
<div class="t" style="left:548.80px;transform-origin:0 0;top:1009.87px;font-size:16.72px;line-height:18.67px;color:#5f6368;transform:scaleX(1.0249);">100% of total</div>
<div class="t" style="left:763.70px;transform-origin:0 0;top:979.29px;font-size:18.02px;line-height:20.13px;color:#2a2d32;font-weight:bold;transform:scaleX(1.0847);">247</div>
<div class="t" style="left:696.00px;transform-origin:0 0;top:1009.87px;font-size:16.72px;line-height:18.67px;color:#5f6368;transform:scaleX(1.0279);">100% of total</div>
<div class="t" style="left:908.60px;transform-origin:0 0;top:979.29px;font-size:18.02px;line-height:20.13px;color:#2a2d32;font-weight:bold;transform:scaleX(1.0254);">27.75%</div>
<div class="t" style="left:917.00px;transform-origin:0 0;top:1009.87px;font-size:16.72px;line-height:18.67px;color:#5f6368;transform:scaleX(0.9478);">Avg 0%</div>
<div class="t" style="left:1073.00px;transform-origin:0 0;top:979.29px;font-size:18.02px;line-height:20.13px;color:#2a2d32;font-weight:bold;transform:scaleX(1.1766);">0.30</div>
<div class="t" style="left:1060.40px;transform-origin:0 0;top:1009.87px;font-size:16.72px;line-height:18.67px;color:#5f6368;transform:scaleX(0.9408);">Avg 0%</div>
<div class="t" style="left:1261.00px;transform-origin:0 0;top:979.29px;font-size:18.02px;line-height:20.13px;color:#2a2d32;font-weight:bold;transform:scaleX(0.9250);">17s</div>
<div class="t" style="left:1234.40px;transform-origin:0 0;top:1009.87px;font-size:16.72px;line-height:18.67px;color:#5f6368;transform:scaleX(0.9495);">Avg 0%</div>
<div class="t" style="left:1457.00px;transform-origin:0 0;top:979.29px;font-size:18.02px;line-height:20.13px;color:#2a2d32;font-weight:bold;transform:scaleX(1.0576);">6,801</div>
<div class="t" style="left:1404.70px;transform-origin:0 0;top:1009.87px;font-size:16.72px;line-height:18.67px;color:#5f6368;transform:scaleX(1.0249);">100% of total</div>
<div class="t" style="left:1676.60px;transform-origin:0 0;top:979.29px;font-size:18.02px;line-height:20.13px;color:#2a2d32;font-weight:bold;transform:scaleX(1.2279);">0.00</div>
<div class="a" style="left:53px;top:1042.3px;width:1762px;height:54.7px;background:#f8f9fa"></div>
<div class="a" style="left:68px;top:1056.5px;width:24.7px;height:24.7px;background:#1a73e8;border-radius:3px"><svg class="a" style="left:0;top:0" width="25" height="25"><path d="M3.6 13.1L8.9 18.4 21.2 6.2" fill="none" stroke="#fff" stroke-width="2.5"/></svg></div>
<div class="t" style="left:128.23px;transform-origin:0 0;top:1057.65px;font-size:20.06px;line-height:22.40px;color:#3c4043;">1</div>
<div class="t" style="left:173.00px;transform-origin:0 0;top:1057.81px;font-size:19.88px;line-height:22.21px;color:#202124;font-weight:bold;transform:scaleX(0.9050);">China</div>
<div class="t" style="left:376.95px;transform-origin:0 0;top:1057.53px;font-size:20.19px;line-height:22.55px;color:#202124;transform:scaleX(0.9400);">462 <span class="i">(56.62%)</span></div>
<div class="t" style="left:545.93px;transform-origin:0 0;top:1057.53px;font-size:20.19px;line-height:22.55px;color:#202124;transform:scaleX(0.9400);">455 <span class="i">(56.1%)</span></div>
<div class="t" style="left:693.43px;transform-origin:0 0;top:1057.53px;font-size:20.19px;line-height:22.55px;color:#202124;transform:scaleX(0.9400);">37 <span class="i">(14.98%)</span></div>
<div class="t" style="left:918.00px;transform-origin:0 0;top:1057.53px;font-size:20.19px;line-height:22.55px;color:#202124;transform:scaleX(0.9400);">7.99%</div>
<div class="t" style="left:1077.85px;transform-origin:0 0;top:1057.53px;font-size:20.19px;line-height:22.55px;color:#202124;transform:scaleX(0.9400);">0.08</div>
<div class="t" style="left:1269.28px;transform-origin:0 0;top:1057.53px;font-size:20.19px;line-height:22.55px;color:#202124;transform:scaleX(0.9400);">1s</div>
<div class="t" style="left:1378.25px;transform-origin:0 0;top:1057.53px;font-size:20.19px;line-height:22.55px;color:#202124;transform:scaleX(0.9400);">2,111 <span class="i">(31.04%)</span></div>
<div class="t" style="left:1651.00px;transform-origin:0 0;top:1057.53px;font-size:20.19px;line-height:22.55px;color:#202124;transform:scaleX(0.9865);">0.00 <span class="i">(−)</span></div>
<div class="a" style="left:68px;top:1111.5px;width:24.7px;height:24.7px;background:#1a73e8;border-radius:3px"><svg class="a" style="left:0;top:0" width="25" height="25"><path d="M3.6 13.1L8.9 18.4 21.2 6.2" fill="none" stroke="#fff" stroke-width="2.5"/></svg></div>
<div class="t" style="left:128.23px;transform-origin:0 0;top:1112.65px;font-size:20.06px;line-height:22.40px;color:#3c4043;">2</div>
<div class="t" style="left:173.00px;transform-origin:0 0;top:1112.81px;font-size:19.88px;line-height:22.21px;color:#202124;font-weight:bold;transform:scaleX(0.9050);">Singapore</div>
<div class="t" style="left:376.95px;transform-origin:0 0;top:1112.53px;font-size:20.19px;line-height:22.55px;color:#202124;transform:scaleX(0.9400);">335 <span class="i">(41.05%)</span></div>
<div class="t" style="left:567.04px;transform-origin:0 0;top:1112.53px;font-size:20.19px;line-height:22.55px;color:#202124;transform:scaleX(0.9400);">8 <span class="i">(0.99%)</span></div>
<div class="t" style="left:694.85px;transform-origin:0 0;top:1112.53px;font-size:20.19px;line-height:22.55px;color:#202124;transform:scaleX(0.9400);">28 <span class="i">(11.34%)</span></div>
<div class="t" style="left:918.00px;transform-origin:0 0;top:1112.53px;font-size:20.19px;line-height:22.55px;color:#202124;transform:scaleX(0.9400);">8.36%</div>
<div class="t" style="left:1077.85px;transform-origin:0 0;top:1112.53px;font-size:20.19px;line-height:22.55px;color:#202124;transform:scaleX(0.9400);">0.08</div>
<div class="t" style="left:1269.28px;transform-origin:0 0;top:1112.53px;font-size:20.19px;line-height:22.55px;color:#202124;transform:scaleX(0.9400);">4s</div>
<div class="t" style="left:1375.45px;transform-origin:0 0;top:1112.53px;font-size:20.19px;line-height:22.55px;color:#202124;transform:scaleX(0.9400);">1,533 <span class="i">(22.54%)</span></div>
<div class="t" style="left:1651.00px;transform-origin:0 0;top:1112.53px;font-size:20.19px;line-height:22.55px;color:#202124;transform:scaleX(0.9865);">0.00 <span class="i">(−)</span></div>
<div class="a" style="left:53px;top:1152.0px;width:1762px;height:55.5px;background:#f8f9fa"></div>
<div class="a" style="left:68px;top:1166.0px;width:24.7px;height:24.7px;background:#1a73e8;border-radius:3px"><svg class="a" style="left:0;top:0" width="25" height="25"><path d="M3.6 13.1L8.9 18.4 21.2 6.2" fill="none" stroke="#fff" stroke-width="2.5"/></svg></div>
<div class="t" style="left:128.23px;transform-origin:0 0;top:1167.15px;font-size:20.06px;line-height:22.40px;color:#3c4043;">3</div>
<div class="t" style="left:173.00px;transform-origin:0 0;top:1167.31px;font-size:19.88px;line-height:22.21px;color:#202124;font-weight:bold;transform:scaleX(0.9050);">United States</div>
<div class="t" style="left:376.95px;transform-origin:0 0;top:1167.03px;font-size:20.19px;line-height:22.55px;color:#202124;transform:scaleX(0.9400);">242 <span class="i">(29.66%)</span></div>
<div class="t" style="left:535.35px;transform-origin:0 0;top:1167.03px;font-size:20.19px;line-height:22.55px;color:#202124;transform:scaleX(0.9400);">237 <span class="i">(29.22%)</span></div>
<div class="t" style="left:693.43px;transform-origin:0 0;top:1167.03px;font-size:20.19px;line-height:22.55px;color:#202124;transform:scaleX(0.9400);">164 <span class="i">(66.4%)</span></div>
<div class="t" style="left:907.43px;transform-origin:0 0;top:1167.03px;font-size:20.19px;line-height:22.55px;color:#202124;transform:scaleX(0.9400);">53.77%</div>
<div class="t" style="left:1077.85px;transform-origin:0 0;top:1167.03px;font-size:20.19px;line-height:22.55px;color:#202124;transform:scaleX(0.9400);">0.68</div>
<div class="t" style="left:1258.70px;transform-origin:0 0;top:1167.03px;font-size:20.19px;line-height:22.55px;color:#202124;transform:scaleX(0.9400);">45s</div>
<div class="t" style="left:1375.45px;transform-origin:0 0;top:1167.03px;font-size:20.19px;line-height:22.55px;color:#202124;transform:scaleX(0.9400);">2,389 <span class="i">(35.13%)</span></div>
<div class="t" style="left:1651.00px;transform-origin:0 0;top:1167.03px;font-size:20.19px;line-height:22.55px;color:#202124;transform:scaleX(0.9865);">0.00 <span class="i">(−)</span></div>
<div class="t" style="left:128.23px;transform-origin:0 0;top:1219.15px;font-size:20.06px;line-height:22.40px;color:#3c4043;">4</div>
<div class="t" style="left:173.00px;transform-origin:0 0;top:1219.31px;font-size:19.88px;line-height:22.21px;color:#202124;font-weight:bold;transform:scaleX(0.9050);">(not set)</div>
<div class="t" style="left:398.06px;transform-origin:0 0;top:1219.03px;font-size:20.19px;line-height:22.55px;color:#202124;transform:scaleX(0.9400);">27 <span class="i">(3.31%)</span></div>
<div class="t" style="left:556.46px;transform-origin:0 0;top:1219.03px;font-size:20.19px;line-height:22.55px;color:#202124;transform:scaleX(0.9400);">27 <span class="i">(3.33%)</span></div>
<div class="t" style="left:740.92px;transform-origin:0 0;top:1219.03px;font-size:20.19px;line-height:22.55px;color:#202124;transform:scaleX(0.9400);">0 <span class="i">(0%)</span></div>
<div class="t" style="left:944.38px;transform-origin:0 0;top:1219.03px;font-size:20.19px;line-height:22.55px;color:#202124;transform:scaleX(0.9400);">0%</div>
<div class="t" style="left:1077.85px;transform-origin:0 0;top:1219.03px;font-size:20.19px;line-height:22.55px;color:#202124;transform:scaleX(0.9400);">0.00</div>
<div class="t" style="left:1269.28px;transform-origin:0 0;top:1219.03px;font-size:20.19px;line-height:22.55px;color:#202124;transform:scaleX(0.9400);">0s</div>
<div class="t" style="left:1412.36px;transform-origin:0 0;top:1219.03px;font-size:20.19px;line-height:22.55px;color:#202124;transform:scaleX(0.9400);">89 <span class="i">(1.31%)</span></div>
<div class="t" style="left:1651.00px;transform-origin:0 0;top:1219.03px;font-size:20.19px;line-height:22.55px;color:#202124;transform:scaleX(0.9865);">0.00 <span class="i">(−)</span></div>
<div class="a" style="left:53px;top:1256.0px;width:1762px;height:55.5px;background:#f8f9fa"></div>
<div class="a" style="left:68px;top:1270.2px;width:24.7px;height:24.7px;background:#1a73e8;border-radius:3px"><svg class="a" style="left:0;top:0" width="25" height="25"><path d="M3.6 13.1L8.9 18.4 21.2 6.2" fill="none" stroke="#fff" stroke-width="2.5"/></svg></div>
<div class="t" style="left:128.23px;transform-origin:0 0;top:1271.35px;font-size:20.06px;line-height:22.40px;color:#3c4043;">5</div>
<div class="t" style="left:173.00px;transform-origin:0 0;top:1271.51px;font-size:19.88px;line-height:22.21px;color:#202124;font-weight:bold;transform:scaleX(0.9050);">Ireland</div>
<div class="t" style="left:398.06px;transform-origin:0 0;top:1271.23px;font-size:20.19px;line-height:22.55px;color:#202124;transform:scaleX(0.9400);">23 <span class="i">(2.82%)</span></div>
<div class="t" style="left:556.46px;transform-origin:0 0;top:1271.23px;font-size:20.19px;line-height:22.55px;color:#202124;transform:scaleX(0.9400);">23 <span class="i">(2.84%)</span></div>
<div class="t" style="left:703.96px;transform-origin:0 0;top:1271.23px;font-size:20.19px;line-height:22.55px;color:#202124;transform:scaleX(0.9400);">12 <span class="i">(4.86%)</span></div>
<div class="t" style="left:907.43px;transform-origin:0 0;top:1271.23px;font-size:20.19px;line-height:22.55px;color:#202124;transform:scaleX(0.9400);">52.17%</div>
<div class="t" style="left:1077.85px;transform-origin:0 0;top:1271.23px;font-size:20.19px;line-height:22.55px;color:#202124;transform:scaleX(0.9400);">0.52</div>
<div class="t" style="left:1258.70px;transform-origin:0 0;top:1271.23px;font-size:20.19px;line-height:22.55px;color:#202124;transform:scaleX(0.9400);">15s</div>
<div class="t" style="left:1401.83px;transform-origin:0 0;top:1271.23px;font-size:20.19px;line-height:22.55px;color:#202124;transform:scaleX(0.9400);">171 <span class="i">(2.51%)</span></div>
<div class="t" style="left:1651.00px;transform-origin:0 0;top:1271.23px;font-size:20.19px;line-height:22.55px;color:#202124;transform:scaleX(0.9865);">0.00 <span class="i">(−)</span></div>
<div class="a" style="left:53px;top:1041.6px;width:1762px;height:1.3px;background:#e8eaed"></div>
<div class="a" style="left:53px;top:1096.3px;width:1762px;height:1.3px;background:#e8eaed"></div>
<div class="a" style="left:53px;top:1151.3px;width:1762px;height:1.3px;background:#e8eaed"></div>
<div class="a" style="left:53px;top:1206.8px;width:1762px;height:1.3px;background:#e8eaed"></div>
<div class="a" style="left:53px;top:1255.3px;width:1762px;height:1.3px;background:#e8eaed"></div>
<div class="a" style="left:53px;top:1310.8px;width:1762px;height:1.3px;background:#e8eaed"></div>
<div class="a" style="left:353.5px;top:1042px;width:1.3px;height:300px;background:#e3e3e3"></div>
<div class="a" style="left:1815.5px;top:824.5px;width:41px;height:500px;background:#fff"></div>
</body></html>
